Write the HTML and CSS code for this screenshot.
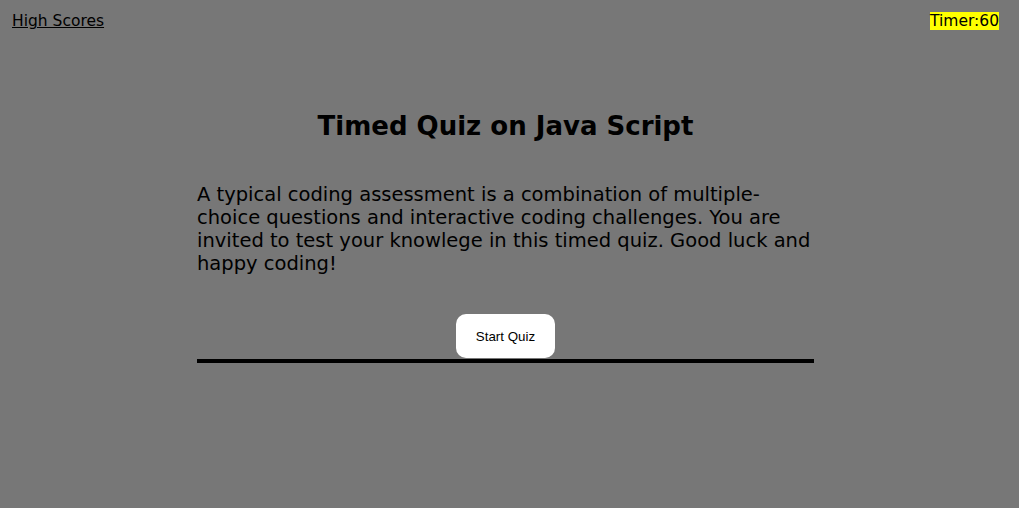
FILE: index.html
```html
<!DOCTYPE html>
<html lang="en">
<head>
<meta charset="utf-8">
<title>Timed Quiz</title>
<link rel="stylesheet" href="styles.css">
</head>
<body>
<header class="top-bar">
  <a class="high-scores" href="#">High Scores</a>
  <span class="timer">Timer:60</span>
</header>
<main class="quiz">
  <h1 class="quiz-title">Timed Quiz on Java Script</h1>
  <p class="quiz-intro">A typical coding assessment is a combination of multiple-choice questions and interactive coding challenges. You are invited to test your knowlege in this timed quiz. Good luck and happy coding!</p>
  <button class="start-btn" type="button">Start Quiz</button>
</main>
</body>
</html>
```
FILE: styles.css
```css
html, body {
  margin: 0;
  padding: 0;
  background: #777777;
  color: #000;
  font-family: "DejaVu Sans", "Noto Sans", sans-serif;
  height: 100%;
}

.top-bar {
  display: flex;
  justify-content: space-between;
  align-items: flex-start;
  padding: 12px 20px 0 12px;
  font-size: 15.5px;
  line-height: 18px;
}

.high-scores {
  color: #000;
  text-decoration: underline;
}

.timer {
  background: #ffff00;
  color: #000;
}

.quiz {
  width: 617px;
  margin: 0 auto;
  padding-right: 8px;
  display: flex;
  flex-direction: column;
}

.quiz-title {
  margin: 81px 0 0;
  font-size: 26px;
  line-height: 30px;
  font-weight: bold;
  text-align: center;
}

.quiz-intro {
  margin: 42px 0 0;
  font-size: 19.5px;
  line-height: 23px;
}

.start-btn {
  align-self: center;
  margin: 39px 0 0;
  width: 99px;
  height: 44px;
  border: none;
  border-radius: 10px;
  background: #fff;
  color: #000;
  font-family: "Liberation Sans", Arial, sans-serif;
  font-size: 13.333px;
  padding: 0;
}

.quiz::after {
  content: "";
  display: block;
  margin-top: 1px;
  border-bottom: 4px solid #000;
  width: 617px;
}
```
